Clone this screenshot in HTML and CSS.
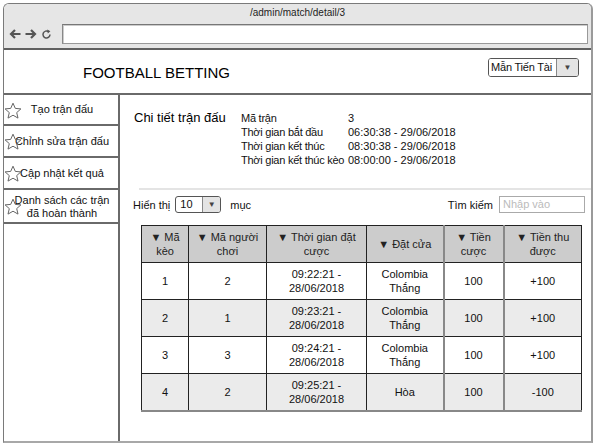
FILE: index.html
```html
<!DOCTYPE html>
<html lang="vi">
<head>
<meta charset="utf-8">
<title>Football Betting</title>
<link rel="stylesheet" href="styles.css">
</head>
<body>
<div class="window">
  <div class="titlebar">
    <div class="url-text">/admin/match/detail/3</div>
    <div class="navrow">
      <div class="navicons">
        <svg width="12" height="12" viewBox="0 0 12 12"><path d="M11.5 6H2M6 2L2 6l4 4" fill="none" stroke="#555" stroke-width="2.2"/></svg>
        <svg width="12" height="12" viewBox="0 0 12 12"><path d="M0.5 6H10M6 2l4 4-4 4" fill="none" stroke="#555" stroke-width="2.2"/></svg>
        <svg width="11" height="11" viewBox="0 0 11 11"><path d="M9 5.5A3.5 3.5 0 1 1 7.5 2.6" fill="none" stroke="#555" stroke-width="1.5"/><path d="M6.2 0.6L9.4 2.2 6.8 4.6Z" fill="#555"/></svg>
      </div>
      <div class="urlbox"></div>
    </div>
  </div>
  <div class="header">
    <div class="brand">FOOTBALL BETTING</div>
    <div class="userselect">
      <span class="userselect-text">Mẫn Tiến Tài</span>
      <span class="userselect-btn">▼</span>
    </div>
  </div>
  <div class="body">
    <nav class="sidebar">
      <div class="side-item">
        <svg class="star" width="18" height="18" viewBox="0 0 18 18"><path d="M9 1.2l2.3 5.2 5.6.5-4.2 3.7 1.3 5.5L9 13.2l-5 2.9 1.3-5.5L1.1 6.9l5.6-.5z" fill="#fff" stroke="#666" stroke-width="1"/></svg>
        <span>Tạo trận đấu</span>
      </div>
      <div class="side-item">
        <svg class="star" width="18" height="18" viewBox="0 0 18 18"><path d="M9 1.2l2.3 5.2 5.6.5-4.2 3.7 1.3 5.5L9 13.2l-5 2.9 1.3-5.5L1.1 6.9l5.6-.5z" fill="none" stroke="#666" stroke-width="1"/></svg>
        <span>Chỉnh sửa trận đấu</span>
      </div>
      <div class="side-item">
        <svg class="star" width="18" height="18" viewBox="0 0 18 18"><path d="M9 1.2l2.3 5.2 5.6.5-4.2 3.7 1.3 5.5L9 13.2l-5 2.9 1.3-5.5L1.1 6.9l5.6-.5z" fill="none" stroke="#666" stroke-width="1"/></svg>
        <span>Cập nhật kết quả</span>
      </div>
      <div class="side-item">
        <svg class="star" width="18" height="18" viewBox="0 0 18 18"><path d="M9 1.2l2.3 5.2 5.6.5-4.2 3.7 1.3 5.5L9 13.2l-5 2.9 1.3-5.5L1.1 6.9l5.6-.5z" fill="none" stroke="#666" stroke-width="1"/></svg>
        <span>Danh sách các trận<br>đã hoàn thành</span>
      </div>
    </nav>
    <main class="content">
      <section class="detail">
        <div class="detail-title">Chi tiết trận đấu</div>
        <div class="detail-grid">
          <div class="lbl">Mã trận</div><div>3</div>
          <div class="lbl">Thời gian bắt đầu</div><div>06:30:38 - 29/06/2018</div>
          <div class="lbl">Thời gian kết thúc</div><div>08:30:38 - 29/06/2018</div>
          <div class="lbl">Thời gian kết thúc kèo</div><div>08:00:00 - 29/06/2018</div>
        </div>
      </section>
      <div class="controls">
        <div class="show">
          <span>Hiển thị</span>
          <span class="pagesel"><span class="pagesel-val">10</span><span class="pagesel-btn">▼</span></span>
          <span class="show-unit">mục</span>
        </div>
        <div class="search">
          <span>Tìm kiếm</span>
          <span class="searchbox">Nhập vào</span>
        </div>
      </div>
      <table class="bets">
        <thead>
          <tr>
            <th class="c1">▼ Mã<br>kèo</th>
            <th class="c2">▼ Mã người<br>chơi</th>
            <th class="c3">▼ Thời gian đặt<br>cược</th>
            <th class="c4">▼ Đặt cửa</th>
            <th class="c5 thick">▼ Tiền<br>cược</th>
            <th class="c6 thick">▼ Tiền thu<br>được</th>
          </tr>
        </thead>
        <tbody>
          <tr><td>1</td><td>2</td><td>09:22:21 -<br>28/06/2018</td><td>Colombia<br>Thắng</td><td class="thick">100</td><td class="thick">+100</td></tr>
          <tr class="alt"><td>2</td><td>1</td><td>09:23:21 -<br>28/06/2018</td><td>Colombia<br>Thắng</td><td class="thick">100</td><td class="thick">+100</td></tr>
          <tr><td>3</td><td>3</td><td>09:24:21 -<br>28/06/2018</td><td>Colombia<br>Thắng</td><td class="thick">100</td><td class="thick">+100</td></tr>
          <tr class="alt"><td>4</td><td>2</td><td>09:25:21 -<br>28/06/2018</td><td>Hòa</td><td class="thick">100</td><td class="thick">-100</td></tr>
        </tbody>
      </table>
    </main>
  </div>
</div>
</body>
</html>
```

FILE: styles.css
```css
* { box-sizing: border-box; }
html, body { margin: 0; padding: 0; background: #fff; }
body {
  font-family: "Liberation Sans", Arial, sans-serif;
  font-size: 11px;
  color: #111;
}
.window {
  margin: 3px 0 0 3px;
  width: 590px;
  height: 440px;
  border: 1px solid #7a7a7a;
  border-right: 2px solid #9a9a9a;
  border-bottom: 2px solid #a8a8a8;
  border-radius: 6px 6px 0 0;
  display: flex;
  flex-direction: column;
  overflow: hidden;
}
.titlebar {
  height: 46px;
  background: #e6e6e6;
  border-bottom: 2px solid #606060;
  flex: none;
}
.url-text {
  text-align: center;
  font-size: 10px;
  line-height: 12px;
  padding-top: 3px;
  color: #222;
}
.navrow {
  display: flex;
  align-items: center;
  margin-top: 5px;
  height: 20px;
}
.navicons {
  width: 58px;
  display: flex;
  align-items: center;
  gap: 4px;
  padding-left: 5px;
}
.urlbox {
  flex: 1;
  height: 20px;
  margin-right: 3px;
  background: #fff;
  border: 1px solid #999;
  border-top-color: #777;
  border-left-color: #888;
  box-shadow: inset 1px 1px 0 #ccc;
}
.header {
  height: 45px;
  flex: none;
  border-bottom: 2px solid #6a6a6a;
  display: flex;
  align-items: flex-start;
  justify-content: space-between;
  padding: 0 12px 0 79px;
}
.brand {
  font-size: 15px;
  line-height: 18px;
  margin-top: 14px;
  color: #000;
}
.userselect {
  margin-top: 8px;
  display: flex;
  height: 19px;
  border: 1px solid #555;
  border-radius: 3px;
  overflow: hidden;
  font-size: 11px;
}
.userselect-text {
  width: 67px;
  padding-left: 2px;
  white-space: nowrap;
  letter-spacing: -0.2px;
  line-height: 17px;
  background: #fff;
}
.userselect-btn {
  width: 22px;
  border-left: 1px solid #888;
  background: #e4e4e4;
  text-align: center;
  font-size: 8px;
  line-height: 17px;
  color: #444;
}
.body {
  flex: 1;
  display: flex;
  min-height: 0;
}
.sidebar {
  width: 116px;
  flex: none;
  border-right: 2px solid #6a6a6a;
}
.side-item {
  position: relative;
  height: 32px;
  border-bottom: 2px solid #6a6a6a;
  display: flex;
  align-items: center;
  justify-content: center;
  text-align: center;
  line-height: 13px;
  padding-left: 2px;
}
.side-item:first-child { height: 31px; }
.side-item:last-child { height: 34px; padding-top: 1px; }
.side-item .star {
  position: absolute;
  left: 0;
  top: 50%;
  margin-top: -8px;
}
.content {
  flex: 1;
  min-width: 0;
}
.detail {
  display: flex;
  padding-top: 16px;
  height: 95px;
  margin-left: 19px;
  border-bottom: 2px solid #e4e4e4;
}
.detail-title {
  width: 107px;
  flex: none;
  margin-left: -5px;
  font-size: 13px;
  line-height: 14px;
  color: #000;
  white-space: nowrap;
}
.detail-grid {
  display: grid;
  grid-template-columns: 107px auto;
  grid-auto-rows: 14px;
  line-height: 14px;
  align-content: start;
  white-space: nowrap;
}
.detail-grid .lbl { letter-spacing: -0.25px; }
.controls {
  display: flex;
  justify-content: space-between;
  align-items: center;
  padding: 6px 6px 0 13px;
  height: 23px;
}
.show, .search {
  display: flex;
  align-items: center;
}
.pagesel {
  margin-left: 5px;
  display: flex;
  height: 17px;
  width: 46px;
  border: 1px solid #555;
  border-radius: 3px;
  overflow: hidden;
}
.pagesel-val {
  flex: 1;
  padding-left: 4px;
  line-height: 15px;
}
.pagesel-btn {
  width: 18px;
  border-left: 1px solid #888;
  background: #e4e4e4;
  text-align: center;
  font-size: 8px;
  line-height: 15px;
  color: #444;
}
.show-unit { margin-left: 9px; }
.searchbox {
  margin-left: 6px;
  width: 86px;
  height: 17px;
  border: 1px solid #aaa;
  padding-left: 3px;
  line-height: 15px;
  color: #bbb;
}
.bets {
  margin: 12px 0 0 21px;
  border-collapse: collapse;
  width: 440px;
  table-layout: fixed;
  border-left: 1px solid #777;
  border-right: 1px solid #666;
  border-bottom: 2px solid #888;
}
.bets th, .bets td {
  border: 1px solid #222;
  text-align: center;
  line-height: 14px;
  height: 37px;
  padding: 0 2px;
  font-weight: normal;
  color: #111;
}
.bets th {
  background: #cccccc;
  color: #222;
}
.bets .thick { border-left: 2px solid #888; }
.bets tr.alt td { background: #ebebeb; }
.c1 { width: 47px; }
.c2 { width: 78px; }
.c3 { width: 100px; }
.c4 { width: 77px; }
.c5 { width: 60px; }
.c6 { width: 78px; }
```
